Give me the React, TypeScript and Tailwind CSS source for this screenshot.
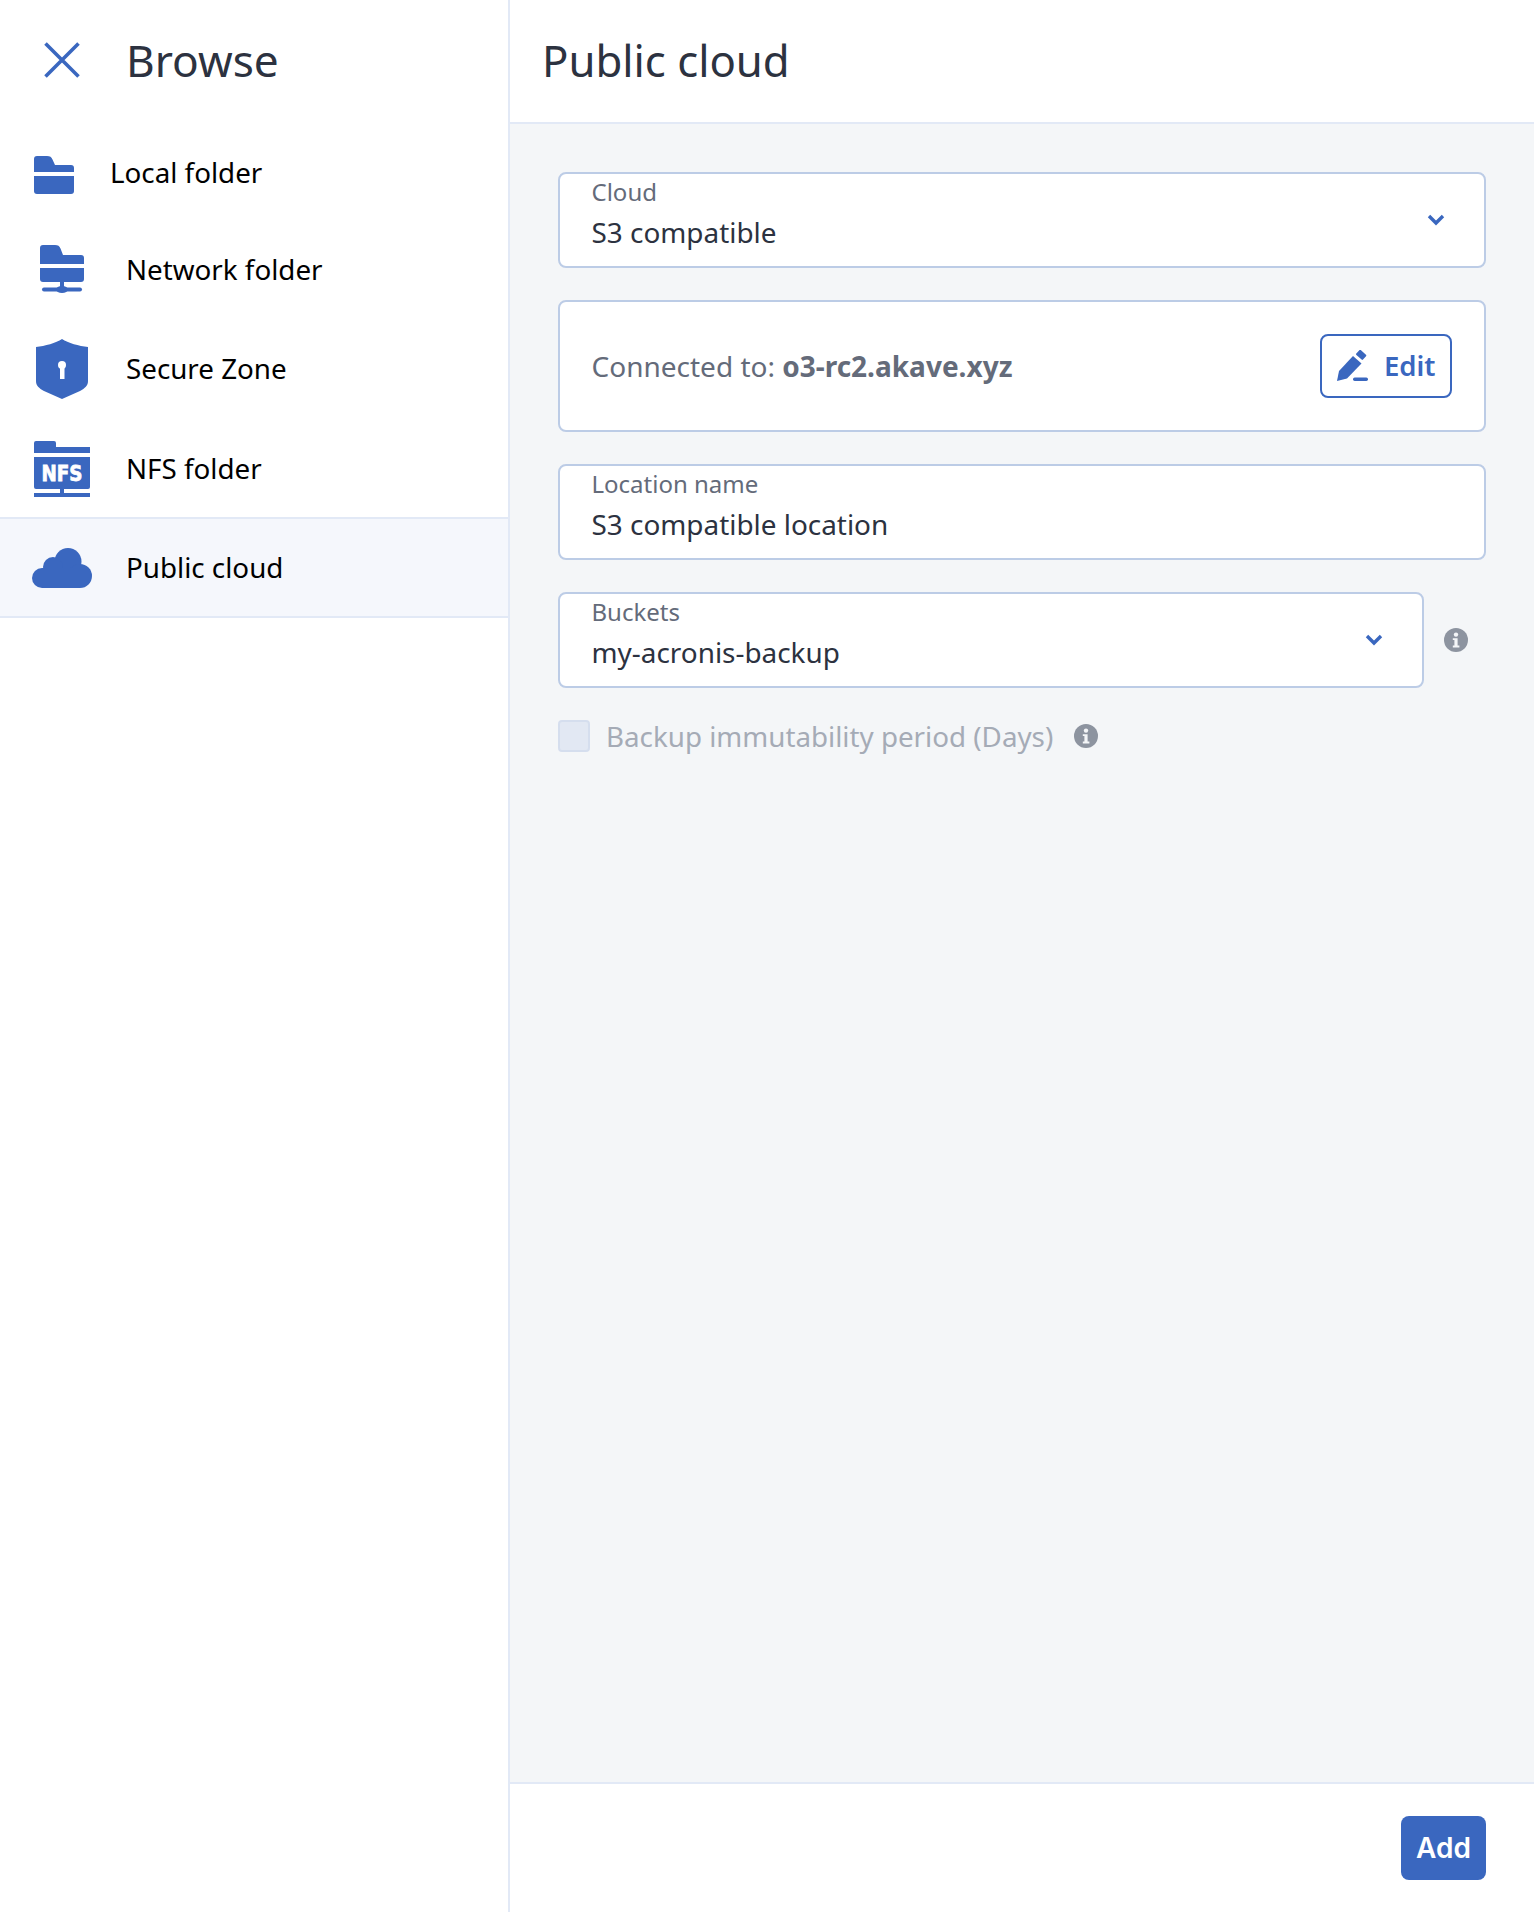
import React from "react";

const BLUE = "#3a67bf";

function Chevron() {
  return (
    <svg width="18" height="12" viewBox="0 0 18 12" fill="none" className="shrink-0">
      <path d="M2 2l7 7 7-7" stroke={BLUE} strokeWidth="3.4" />
    </svg>
  );
}

function Info() {
  return (
    <svg width="24" height="24" viewBox="0 0 24 24" className="shrink-0">
      <circle cx="12" cy="12" r="12" fill="#8d94a0" />
      <circle cx="12" cy="6.600" r="2.200" fill="#f4f6f8" />
      <path d="M8.800 10.200h4.800v7.400h1.800v1.800H8.800v-1.800h1.600v-5.600H8.800z" fill="#f4f6f8" />
    </svg>
  );
}

function LocalIcon() {
  return (
    <svg width="40" height="38" viewBox="0 0 40 38" fill={BLUE}>
      <path d="M3 0h10c3 0 4.500 1 5.500 3.500L21 9h16a3 3 0 0 1 3 3v4H0V3a3 3 0 0 1 3-3z" />
      <path d="M0 20h40v15a3 3 0 0 1-3 3H3a3 3 0 0 1-3-3z" />
    </svg>
  );
}

function NetworkIcon() {
  return (
    <svg width="44" height="48" viewBox="0 0 44 48" fill={BLUE}>
      <path d="M3 0h12c3 0 4.500 1 5.500 3.500L23 10h18a3 3 0 0 1 3 3v6H0V3a3 3 0 0 1 3-3z" />
      <path d="M0 23h44v11a3 3 0 0 1-3 3H3a3 3 0 0 1-3-3z" />
      <rect x="20" y="36" width="4" height="8" />
      <rect x="2" y="42.500" width="40" height="4" rx="2" />
      <ellipse cx="22" cy="44.500" rx="6" ry="3.500" />
    </svg>
  );
}

function ShieldIcon() {
  return (
    <svg width="52" height="60" viewBox="0 0 52 60">
      <path
        d="M26 0C32 4 43 7 52 8v34c0 5-3 7-8 10L26 60 8 52c-5-3-8-5-8-10V8C9 7 20 4 26 0z"
        fill={BLUE}
      />
      <circle cx="26" cy="26" r="4" fill="#fff" />
      <rect x="24" y="27" width="4.500" height="13" fill="#fff" />
    </svg>
  );
}

function NfsIcon() {
  return (
    <svg width="56" height="56" viewBox="0 0 56 56" fill={BLUE}>
      <path d="M2 0h18a2 2 0 0 1 2 2v4h34v6H0V2a2 2 0 0 1 2-2z" />
      <path d="M0 16h56v30a2 2 0 0 1-2 2H2a2 2 0 0 1-2-2z" />
      <rect x="26" y="47" width="4" height="6" />
      <rect x="0" y="52" width="56" height="4" />
      <text
        x="7.500"
        y="40"
        fill="#fff"
        stroke="#fff"
        strokeWidth="0.800"
        fontFamily="'DejaVu Sans', sans-serif"
        fontWeight="700"
        fontSize="22"
        textLength="41"
        lengthAdjust="spacingAndGlyphs"
      >
        NFS
      </text>
    </svg>
  );
}

function CloudIcon() {
  return (
    <svg width="60" height="40" viewBox="0 0 60 40" fill={BLUE}>
      <circle cx="36" cy="13.500" r="13.500" />
      <circle cx="21" cy="19" r="10" />
      <circle cx="10" cy="30" r="10" />
      <circle cx="48" cy="28" r="12" />
      <rect x="10" y="20" width="38" height="20" />
    </svg>
  );
}

function PencilIcon() {
  return (
    <svg width="32" height="32" viewBox="0 0 32 32" fill={BLUE}>
      <path d="M1 31l2-10L17 6l8.500 7.500L11 28.500z" />
      <rect x="20.500" y="1.500" width="9" height="6.500" rx="1" transform="rotate(42 25 5)" />
      <rect x="17" y="27.500" width="15" height="3.500" rx="1.700" />
    </svg>
  );
}

function NavRow({
  icon,
  label,
  iconBox,
  gap,
  h,
  textShift,
  active,
}: {
  icon: React.ReactNode;
  label: string;
  iconBox: string;
  gap: string;
  h: string;
  textShift: string;
  active?: boolean;
}) {
  return (
    <div
      className={`flex items-center ${h} ${gap} ${
        active ? "bg-[#f5f7fc] border-y-2 border-[#e2e9f6]" : ""
      }`}
    >
      <div className={`flex justify-center shrink-0 ${iconBox}`}>{icon}</div>
      <span className={`text-[27.750px] leading-[38px] text-black ${textShift}`}>{label}</span>
    </div>
  );
}

function Field({
  label,
  value,
  chevron,
}: {
  label: string;
  value: string;
  chevron?: boolean;
}) {
  return (
    <div className="flex flex-1 items-center h-[96px] bg-white border-2 border-[#bccce6] rounded-lg pl-[31.500px] pr-[39px]">
      <div className="flex flex-col flex-1 self-start pt-[1.500px]">
        <span className="text-[24px] leading-[32px] text-[#646b7a]">{label}</span>
        <span className="text-[27.900px] leading-[40px] mt-[4px] text-[#2c3240]">{value}</span>
      </div>
      {chevron && <Chevron />}
    </div>
  );
}

export default function App() {
  return (
    <div
      className="flex w-[1534px] h-[1912px] bg-white overflow-hidden"
      style={{ fontFamily: "'Noto Sans', sans-serif" }}
    >
      <aside className="w-[510px] shrink-0 border-r-2 border-[#e2e9f6] flex flex-col">
        <div className="flex items-center h-[123px] pl-[44px] gap-[46px]">
          <svg width="36" height="36" viewBox="0 0 36 36" fill="none" className="shrink-0 -mt-[3px]">
            <path d="M1.500 1.500l33 33M34.500 1.500l-33 33" stroke={BLUE} strokeWidth="3.600" />
          </svg>
          <span className="text-[44.200px] leading-[60px] text-[#2c3240] -mt-[4px]">Browse</span>
        </div>
        <NavRow icon={<LocalIcon />} label="Local folder" iconBox="w-[40px] ml-[34px] mt-[4px]" gap="gap-[36px]" h="h-[100px]" textShift="-mt-[2px]" />
        <NavRow icon={<NetworkIcon />} label="Network folder" iconBox="w-[44px] ml-[40px] -mt-[4px]" gap="gap-[42px]" h="h-[96px]" textShift="-mt-[4px]" />
        <NavRow icon={<ShieldIcon />} label="Secure Zone" iconBox="w-[52px] ml-[36px]" gap="gap-[38px]" h="h-[100px]" textShift="-mt-[2px]" />
        <NavRow icon={<NfsIcon />} label="NFS folder" iconBox="w-[56px] ml-[34px] mt-[2px]" gap="gap-[36px]" h="h-[98px]" textShift="" />
        <NavRow icon={<CloudIcon />} label="Public cloud" iconBox="w-[60px] ml-[32px]" gap="gap-[34px]" h="h-[101px]" textShift="-mt-[2px]" active />
      </aside>

      <main className="flex flex-col flex-1 min-w-0">
        <div className="flex items-center h-[124px] pl-[32px] border-b-2 border-[#e2e9f6]">
          <span className="text-[43.700px] leading-[60px] text-[#2c3240] -mt-[2px]">Public cloud</span>
        </div>

        <div className="flex-1 bg-[#f4f6f8] pt-[48px] pl-[48px] pr-[48px] flex flex-col">
          <div className="flex shrink-0">
            <Field label="Cloud" value="S3 compatible" chevron />
          </div>
          <div className="flex items-center justify-between h-[132px] mt-[32px] shrink-0 bg-white border-2 border-[#bccce6] rounded-lg pl-[31.500px] pr-[32px]">
            <span className="text-[28px] leading-[38px] text-[#646b7a]">
              Connected to: <b className="font-bold">o3-rc2.akave.xyz</b>
            </span>
            <button className="flex items-center h-[64px] w-[132px] pl-[14px] gap-[16px] bg-white border-2 border-[#3a67bf] rounded-lg">
              <PencilIcon />
              <span className="text-[27.500px] leading-[38px] font-semibold text-[#3a67bf]">Edit</span>
            </button>
          </div>
          <div className="flex mt-[32px] shrink-0">
            <Field label="Location name" value="S3 compatible location" />
          </div>
          <div className="flex items-center mt-[32px] shrink-0">
            <Field label="Buckets" value="my-acronis-backup" chevron />
            <div className="w-[62px] flex justify-end pr-[18px] shrink-0">
              <Info />
            </div>
          </div>
          <div className="flex items-center mt-[29px]">
            <div className="w-[32px] h-[32px] bg-[#e2e8f3] border-2 border-[#d5deee] rounded shrink-0" />
            <span className="ml-[16px] text-[27.750px] leading-[38px] text-[#a5abb6]">
              Backup immutability period (Days)
            </span>
            <div className="ml-[21px]">
              <Info />
            </div>
          </div>
        </div>

        <div className="flex items-center justify-end h-[130px] pr-[48px] border-t-2 border-[#e2e9f6] shrink-0">
          <button
            className="w-[85px] h-[64px] rounded-lg bg-[#3a67bf] text-white text-[28px] font-semibold"
            style={{ fontFamily: "Inter, sans-serif" }}
          >
            Add
          </button>
        </div>
      </main>
    </div>
  );
}
